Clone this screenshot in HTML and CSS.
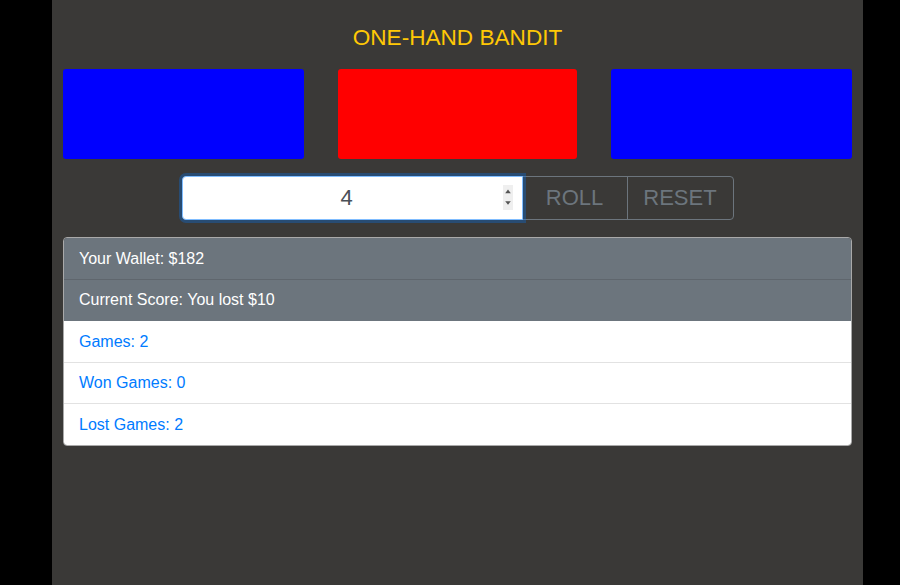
FILE: index.html
```html
<!DOCTYPE html>
<html lang="en">
<head>
<meta charset="utf-8">
<title>One-Hand Bandit</title>
<link rel="stylesheet" href="styles.css">
</head>
<body>
<main class="app">
  <h1 class="title">ONE-HAND BANDIT</h1>
  <div class="reels">
    <div class="reel reel-blue"></div>
    <div class="reel reel-red"></div>
    <div class="reel reel-blue"></div>
  </div>
  <div class="controls">
    <div class="bet">
      <input class="bet-input" type="text" value="4" aria-label="Bet">
      <span class="spinner">
        <svg width="10" height="25" viewBox="0 0 10 25">
          <rect x="0" y="0" width="10" height="25" fill="#efefef"/>
          <path d="M2.2 8.3 L5 4.6 L7.8 8.3 Z" fill="#555"/>
          <path d="M2.2 16.2 L7.8 16.2 L5 19.8 Z" fill="#555"/>
        </svg>
      </span>
    </div>
    <button class="btn" type="button">ROLL</button>
    <button class="btn btn-last" type="button">RESET</button>
  </div>
  <ul class="stats">
    <li class="stat stat-dark">Your Wallet: $182</li>
    <li class="stat stat-dark">Current Score: You lost $10</li>
    <li class="stat stat-light">Games: 2</li>
    <li class="stat stat-light">Won Games: 0</li>
    <li class="stat stat-light">Lost Games: 2</li>
  </ul>
</main>
</body>
</html>
```
FILE: styles.css
```css
html, body {
  margin: 0;
  height: 100%;
  background: #000;
}

body {
  font-family: "Liberation Sans", Arial, sans-serif;
}

.app {
  margin-left: 52px;
  width: 811px;
  min-height: 585px;
  box-sizing: border-box;
  padding: 0 11px;
  background: #3a3937;
  overflow: hidden;
}

.title {
  margin: 24px 0 0;
  font-size: 22.6px;
  line-height: 28px;
  font-weight: normal;
  color: #ffc805;
  text-align: center;
}

.reels {
  display: grid;
  grid-template-columns: 241px 239px 241px;
  column-gap: 34px;
  margin-top: 17px;
}

.reel {
  height: 90px;
  border-radius: 3px;
}

.reel-blue {
  background: #0000ff;
}

.reel-red {
  background: #ff0000;
}

.controls {
  display: flex;
  justify-content: center;
  margin-top: 17px;
  height: 44px;
}

.bet {
  position: relative;
  z-index: 1;
  width: 341px;
  height: 44px;
}

.bet-input {
  display: block;
  width: 100%;
  height: 44px;
  box-sizing: border-box;
  margin: 0;
  padding: 0 11px 0 0;
  border: 1px solid #80bdff;
  border-radius: 4px 0 0 4px;
  box-shadow: 0 0 0 3px rgba(0, 123, 255, 0.3);
  background: #fff;
  color: #495057;
  font-family: "Liberation Sans", Arial, sans-serif;
  font-size: 22px;
  text-align: center;
  outline: none;
}

.spinner {
  position: absolute;
  right: 10px;
  top: 9px;
  width: 10px;
  height: 25px;
  line-height: 0;
}

.btn {
  width: 106px;
  height: 44px;
  margin: 0 0 0 -1px;
  padding: 0;
  border: 1px solid #6c757d;
  border-radius: 0;
  background: transparent;
  color: #6c757d;
  font-family: "Liberation Sans", Arial, sans-serif;
  font-size: 22px;
  cursor: pointer;
}

.btn-last {
  width: 107px;
  border-radius: 0 4px 4px 0;
}

.stats {
  margin: 17px 0 0;
  padding: 0;
  list-style: none;
  border: 1px solid #a9a9a9;
  border-radius: 4px;
  overflow: hidden;
}

.stat {
  padding: 8.5px 15px 8px;
  font-size: 16px;
  line-height: 24px;
  border-bottom: 1px solid #e2e2e2;
}

.stat:last-child {
  border-bottom: none;
}

.stat-dark {
  background: #6c757d;
  color: #fff;
  border-bottom-color: #5f666d;
}

.stat-dark + .stat-dark {
  border-bottom-color: #6c757d;
}

.stat-light {
  background: #fff;
  color: #007bff;
}
```
